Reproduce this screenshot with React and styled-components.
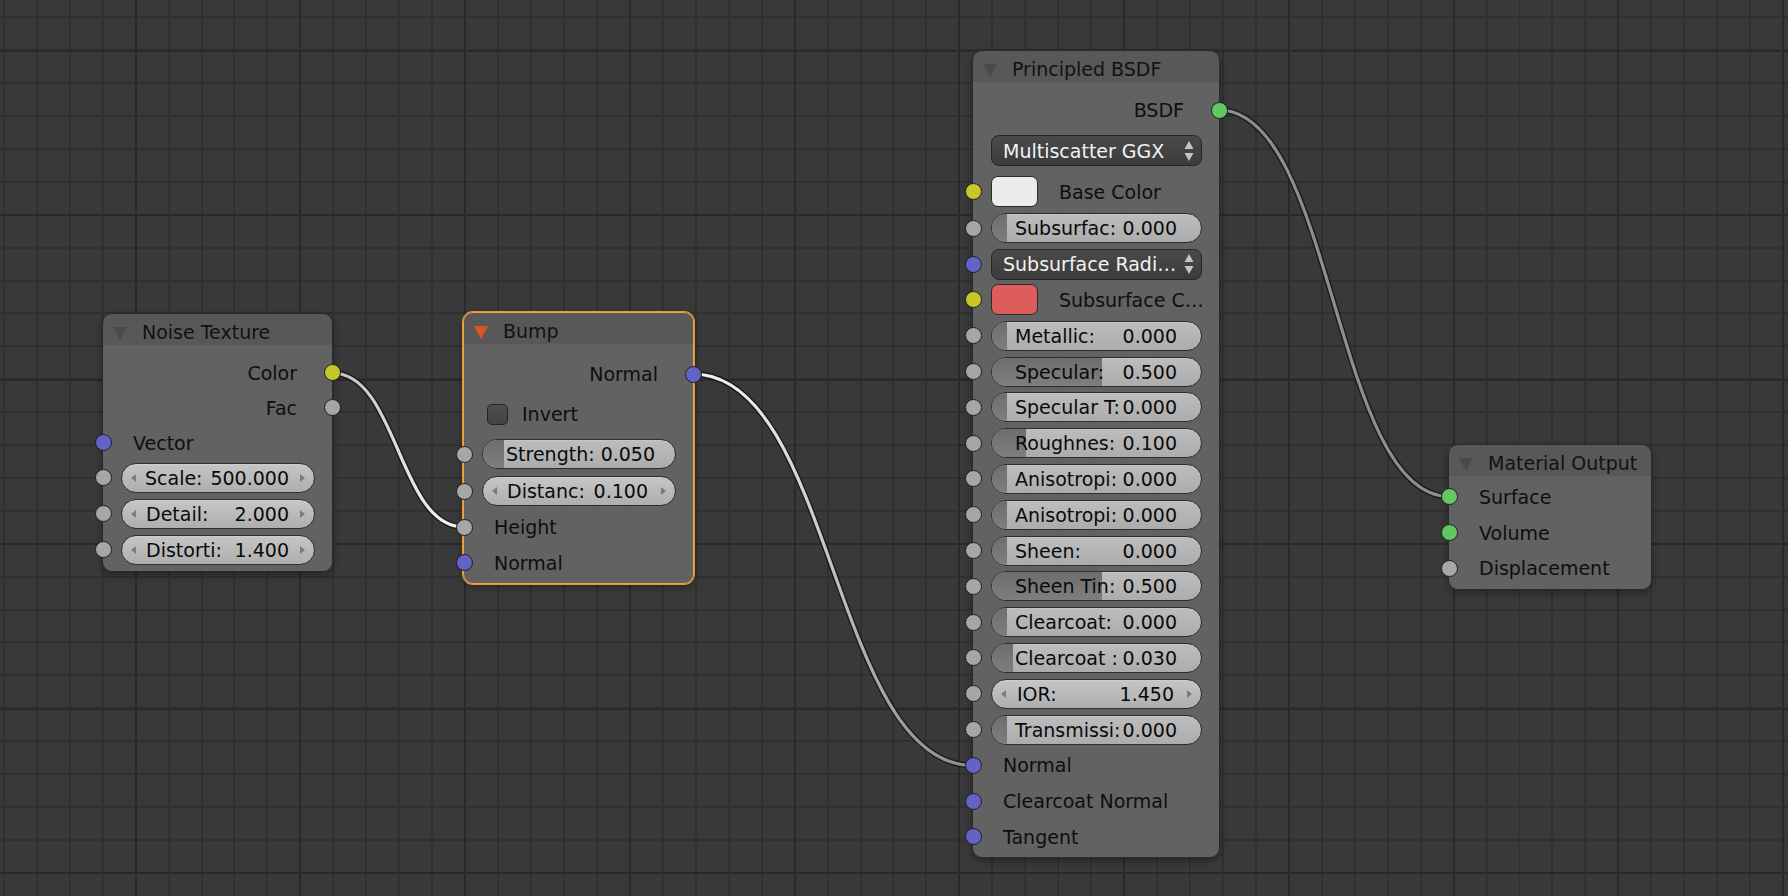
import React from "react";
import styled, { createGlobalStyle } from "styled-components";

const GlobalStyle = createGlobalStyle`
  html, body {
    margin: 0;
    padding: 0;
    background: #393939;
  }
  body {
    font-family: "DejaVu Sans", "Liberation Sans", sans-serif;
  }
`;

const SOCKET = {
  color: "#c7c729",
  float: "#a6a6a6",
  vector: "#6363c7",
  shader: "#63c763",
};

const Canvas = styled.div`
  position: relative;
  width: 1788px;
  height: 896px;
  overflow: hidden;
  background-color: #393939;
  background-image:
    repeating-linear-gradient(to right, transparent 0 134.7px, #292929 134.7px 136.7px, transparent 136.7px 164.75px),
    repeating-linear-gradient(to bottom, transparent 0 49.7px, #292929 49.7px 51.7px, transparent 51.7px 164.5px),
    repeating-linear-gradient(to right, transparent 0 2.8px, #303030 2.8px 4.8px, transparent 4.8px 32.95px),
    repeating-linear-gradient(to bottom, transparent 0 16.3px, #303030 16.3px 18.3px, transparent 18.3px 32.9px);
`;

const LinkLayer = styled.svg`
  position: absolute;
  inset: 0;
  width: 1788px;
  height: 896px;
`;

const NodeBox = styled.div`
  position: absolute;
  left: ${(p) => p.$x}px;
  top: ${(p) => p.$y}px;
  width: ${(p) => p.$w}px;
  height: ${(p) => p.$h}px;
  box-sizing: border-box;
  border-radius: 10px;
  border: 1px solid ${(p) => (p.$active ? "#f2a43a" : "#2a2a2a")};
  background: rgba(101, 101, 101, 0.93);
  box-shadow: ${(p) =>
    p.$active
      ? "0 0 0 1px #e8973a, 0 3px 7px rgba(0,0,0,0.35)"
      : "0 3px 7px rgba(0,0,0,0.35)"};
  display: flex;
  flex-direction: column;
  color: #0e0e0e;
  font-size: 19px;
`;

const Header = styled.div`
  flex: none;
  height: 31px;
  box-sizing: border-box;
  display: flex;
  align-items: center;
  padding: 5px 0 0 10px;
  background: rgba(0, 0, 0, 0.1);
  border-radius: 9px 9px 0 0;
`;

const Collapse = styled.span`
  width: 0;
  height: 0;
  border-left: 7px solid transparent;
  border-right: 7px solid transparent;
  border-top: 13px solid ${(p) => (p.$active ? "#d9561d" : "#4a4a4a")};
  margin-top: 2px;
`;

const Title = styled.span`
  margin-left: 15px;
  color: #121212;
  white-space: nowrap;
`;

const Body = styled.div`
  display: flex;
  flex-direction: column;
  padding-top: ${(p) => p.$pt}px;
`;

const Row = styled.div`
  position: relative;
  flex: none;
  height: ${(p) => p.$h || 36}px;
  display: flex;
  align-items: center;
`;

const Socket = styled.span`
  position: absolute;
  top: 50%;
  ${(p) => (p.$out ? "right: -8.5px;" : "left: -8.5px;")}
  width: 17px;
  height: 17px;
  margin-top: -8.5px;
  box-sizing: border-box;
  border-radius: 50%;
  border: 1px solid #1d1d1d;
  background: ${(p) => p.$color};
  z-index: 2;
`;

const OutLabel = styled.span`
  margin-left: auto;
  padding-right: 35px;
  white-space: nowrap;
`;

const InLabel = styled.span`
  padding-left: 30px;
  white-space: nowrap;
`;

const SliderBox = styled.div`
  position: relative;
  flex: 1;
  height: 30px;
  margin: 0 17px 0 18px;
  box-sizing: border-box;
  border-radius: 15px;
  border: 1px solid #2e2e2e;
  background: linear-gradient(#bdbdbd, #acacac);
  box-shadow: inset 0 1px 0 rgba(255, 255, 255, 0.12);
  overflow: hidden;
  display: flex;
  align-items: center;
  padding: 0 24px 0 23px;
  white-space: nowrap;
  color: #0a0a0a;
`;

const SliderFill = styled.span`
  position: absolute;
  left: 0;
  top: 0;
  bottom: 0;
  background: linear-gradient(#6e6e6e, #7e7e7e);
`;

const FieldBox = styled(SliderBox)`
  background: linear-gradient(#c6c6c6, #aeaeae);
  padding: 0 9px;
`;

const Txt = styled.span`
  position: relative;
  z-index: 1;
`;

const Value = styled(Txt)`
  margin-left: auto;
  margin-right: ${(p) => p.$mr || 0}px;
`;

const FieldLabel = styled(Txt)`
  margin-left: ${(p) => p.$ml || 10}px;
`;

const Arrow = styled.span`
  width: 0;
  height: 0;
  border-top: 4.5px solid transparent;
  border-bottom: 4.5px solid transparent;
  ${(p) =>
    p.$right
      ? "border-left: 5px solid #7b7b7b;"
      : "border-right: 5px solid #7b7b7b;"}
`;

const Dropdown = styled.div`
  flex: 1;
  height: 31px;
  margin: 0 17px 0 18px;
  box-sizing: border-box;
  border-radius: 8px;
  border: 1px solid #262626;
  background: linear-gradient(#4a4a4a, #3b3b3b);
  display: flex;
  align-items: center;
  padding: 0 6px 0 11px;
  color: #f2f2f2;
  white-space: nowrap;
  overflow: hidden;
`;

const Swatch = styled.span`
  flex: none;
  width: 47px;
  height: 31px;
  margin-left: 18px;
  box-sizing: border-box;
  border-radius: 7px;
  border: 1px solid #2c2c2c;
  background: ${(p) => p.$color};
`;

const SwatchLabel = styled.span`
  margin-left: 21px;
  white-space: nowrap;
`;

const Check = styled.span`
  flex: none;
  width: 21px;
  height: 21px;
  margin-left: 23px;
  box-sizing: border-box;
  border-radius: 5px;
  border: 1px solid #252525;
  background: linear-gradient(#4e4e4e, #444444);
`;

const CheckLabel = styled.span`
  margin-left: 14px;
`;

const UpDown = () => (
  <svg width="12" height="24" viewBox="0 0 12 24" style={{ marginLeft: "auto", flex: "none" }}>
    <polygon points="1.5,10 6,2 10.5,10" fill="#c4c4c4" />
    <polygon points="1.5,14 6,22 10.5,14" fill="#c4c4c4" />
  </svg>
);

const Slider = ({ label, value, v }) => (
  <SliderBox>
    <SliderFill style={{ width: `${15 + v * 190}px` }} />
    <Txt>{label}</Txt>
    <Value>{value}</Value>
  </SliderBox>
);

const Field = ({ label, value, ml, mr = 11 }) => (
  <FieldBox>
    <Arrow />
    <FieldLabel $ml={ml}>{label}</FieldLabel>
    <Value $mr={mr}>{value}</Value>
    <Arrow $right />
  </FieldBox>
);

const Node = ({ x, y, w, h, title, active, pt, children }) => (
  <NodeBox $x={x} $y={y} $w={w} $h={h} $active={active}>
    <Header>
      <Collapse $active={active} />
      <Title>{title}</Title>
    </Header>
    <Body $pt={pt}>{children}</Body>
  </NodeBox>
);

const Link = ({ id, x1, y1, x2, y2, c1, c2 }) => {
  const h = Math.abs(x2 - x1) * 0.5;
  const d = `M${x1},${y1} C${x1 + h},${y1} ${x2 - h},${y2} ${x2},${y2}`;
  return (
    <g>
      <defs>
        <linearGradient id={id} gradientUnits="userSpaceOnUse" x1={x1} y1={y1} x2={x2} y2={y2}>
          <stop offset="0" stopColor={c1} />
          <stop offset="1" stopColor={c2} />
        </linearGradient>
      </defs>
      <path d={d} fill="none" stroke="#1b1b1b" strokeWidth="6" />
      <path d={d} fill="none" stroke={`url(#${id})`} strokeWidth="3.2" />
    </g>
  );
};

const LINK_GRAY = "#8e8e8e";
const LINK_MID = "#c4c4c4";
const LINK_HI = "#f4f4f4";

const principledSliders = [
  ["Metallic:", "0.000", 0],
  ["Specular:", "0.500", 0.5],
  ["Specular T:", "0.000", 0],
  ["Roughnes:", "0.100", 0.1],
  ["Anisotropi:", "0.000", 0],
  ["Anisotropi:", "0.000", 0],
  ["Sheen:", "0.000", 0],
  ["Sheen Tin:", "0.500", 0.5],
  ["Clearcoat:", "0.000", 0],
  ["Clearcoat :", "0.030", 0.03],
];

export default function App() {
  const P = 35.8;
  return (
    <>
      <GlobalStyle />
      <Canvas>
        <LinkLayer>
          <Link id="l1" x1={332} y1={373} x2={464} y2={527} c1={LINK_MID} c2={LINK_HI} />
          <Link id="l2" x1={693} y1={374} x2={973} y2={765.5} c1={LINK_HI} c2={LINK_GRAY} />
          <Link id="l3" x1={1219} y1={110} x2={1449} y2={496.5} c1={LINK_GRAY} c2={LINK_GRAY} />
        </LinkLayer>

        <Node x={102} y={313} w={231} h={259} title="Noise Texture" pt={10}>
          <Row $h={35.2}>
            <OutLabel>Color</OutLabel>
            <Socket $out $color={SOCKET.color} />
          </Row>
          <Row $h={35.2}>
            <OutLabel>Fac</OutLabel>
            <Socket $out $color={SOCKET.float} />
          </Row>
          <Row $h={34.6}>
            <Socket $color={SOCKET.vector} />
            <InLabel>Vector</InLabel>
          </Row>
          <Row $h={36}>
            <Socket $color={SOCKET.float} />
            <Field label="Scale:" value="500.000" ml={9} />
          </Row>
          <Row $h={36}>
            <Socket $color={SOCKET.float} />
            <Field label="Detail:" value="2.000" />
          </Row>
          <Row $h={36}>
            <Socket $color={SOCKET.float} />
            <Field label="Distorti:" value="1.400" />
          </Row>
        </Node>

        <Node x={463} y={312} w={231} h={272} title="Bump" active pt={11}>
          <Row $h={38}>
            <OutLabel>Normal</OutLabel>
            <Socket $out $color={SOCKET.vector} />
          </Row>
          <Row $h={42}>
            <Check />
            <CheckLabel>Invert</CheckLabel>
          </Row>
          <Row $h={38}>
            <Socket $color={SOCKET.float} />
            <Slider label={"Strength:\u00a0"} value="0.050" v={0.03} />
          </Row>
          <Row $h={36}>
            <Socket $color={SOCKET.float} />
            <Field label="Distanc:" value="0.100" mr={13} />
          </Row>
          <Row $h={36}>
            <Socket $color={SOCKET.float} />
            <InLabel>Height</InLabel>
          </Row>
          <Row $h={35}>
            <Socket $color={SOCKET.vector} />
            <InLabel>Normal</InLabel>
          </Row>
        </Node>

        <Node x={972} y={50} w={248} h={808} title="Principled BSDF" pt={10}>
          <Row $h={36}>
            <OutLabel>BSDF</OutLabel>
            <Socket $out $color={SOCKET.shader} />
          </Row>
          <Row $h={45}>
            <Dropdown>
              Multiscatter GGX
              <UpDown />
            </Dropdown>
          </Row>
          <Row $h={37.5}>
            <Socket $color={SOCKET.color} />
            <Swatch $color="#ebebeb" />
            <SwatchLabel>Base Color</SwatchLabel>
          </Row>
          <Row $h={P}>
            <Socket $color={SOCKET.float} />
            <Slider label="Subsurfac:" value="0.000" v={0} />
          </Row>
          <Row $h={P}>
            <Socket $color={SOCKET.vector} />
            <Dropdown>
              Subsurface Radi…
              <UpDown />
            </Dropdown>
          </Row>
          <Row $h={P}>
            <Socket $color={SOCKET.color} />
            <Swatch $color="#de5c5c" />
            <SwatchLabel>Subsurface C…</SwatchLabel>
          </Row>
          {principledSliders.map(([label, value, v], i) => (
            <Row $h={P} key={i}>
              <Socket $color={SOCKET.float} />
              <Slider label={label} value={value} v={v} />
            </Row>
          ))}
          <Row $h={P}>
            <Socket $color={SOCKET.float} />
            <Field label="IOR:" value="1.450" ml={11} mr={13} />
          </Row>
          <Row $h={P}>
            <Socket $color={SOCKET.float} />
            <Slider label="Transmissi:" value="0.000" v={0} />
          </Row>
          <Row $h={P}>
            <Socket $color={SOCKET.vector} />
            <InLabel>Normal</InLabel>
          </Row>
          <Row $h={P}>
            <Socket $color={SOCKET.vector} />
            <InLabel>Clearcoat Normal</InLabel>
          </Row>
          <Row $h={P}>
            <Socket $color={SOCKET.vector} />
            <InLabel>Tangent</InLabel>
          </Row>
        </Node>

        <Node x={1448} y={444} w={204} h={146} title="Material Output" pt={2.5}>
          <Row>
            <Socket $color={SOCKET.shader} />
            <InLabel>Surface</InLabel>
          </Row>
          <Row>
            <Socket $color={SOCKET.shader} />
            <InLabel>Volume</InLabel>
          </Row>
          <Row $h={35}>
            <Socket $color={SOCKET.float} />
            <InLabel>Displacement</InLabel>
          </Row>
        </Node>
      </Canvas>
    </>
  );
}
